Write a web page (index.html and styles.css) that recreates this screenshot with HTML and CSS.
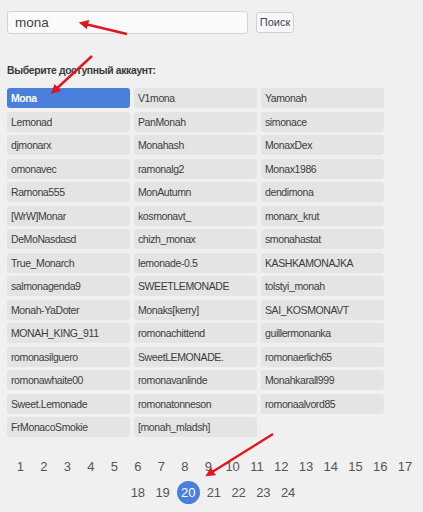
FILE: index.html
```html
<!DOCTYPE html>
<html>
<head>
<meta charset="utf-8">
<link rel="stylesheet" href="styles.css">
</head>
<body>
<div class="page">
  <div class="search">
    <div class="input">mona</div>
    <div class="btn">Поиск</div>
  </div>
  <div class="label">Выберите доступный аккаунт:</div>
  <div class="grid">
    <div class="acc active">Mona</div><div class="acc">V1mona</div><div class="acc">Yamonah</div>
    <div class="acc">Lemonad</div><div class="acc">PanMonah</div><div class="acc">simonace</div>
    <div class="acc">djmonarx</div><div class="acc">Monahash</div><div class="acc">MonaxDex</div>
    <div class="acc">omonavec</div><div class="acc">ramonalg2</div><div class="acc">Monax1986</div>
    <div class="acc">Ramona555</div><div class="acc">MonAutumn</div><div class="acc">dendimona</div>
    <div class="acc">[WrW]Monar</div><div class="acc">kosmonavt_</div><div class="acc">monarx_krut</div>
    <div class="acc">DeMoNasdasd</div><div class="acc">chizh_monax</div><div class="acc">smonahastat</div>
    <div class="acc">True_Monarch</div><div class="acc">lemonade-0.5</div><div class="acc">KASHKAMONAJKA</div>
    <div class="acc">salmonagenda9</div><div class="acc">SWEETLEMONADE</div><div class="acc">tolstyi_monah</div>
    <div class="acc">Monah-YaDoter</div><div class="acc">Monaks[kerry]</div><div class="acc">SAI_KOSMONAVT</div>
    <div class="acc">MONAH_KING_911</div><div class="acc">romonachittend</div><div class="acc">guillermonanka</div>
    <div class="acc">romonasilguero</div><div class="acc">SweetLEMONADE.</div><div class="acc">romonaerlich65</div>
    <div class="acc">romonawhaite00</div><div class="acc">romonavanlinde</div><div class="acc">Monahkarall999</div>
    <div class="acc">Sweet.Lemonade</div><div class="acc">romonatonneson</div><div class="acc">romonaalvord85</div>
    <div class="acc">FrMonacoSmokie</div><div class="acc">[monah_mladsh]</div>
  </div>
  <div class="pager">
    <span>1</span><span>2</span><span>3</span><span>4</span><span>5</span><span>6</span><span>7</span><span>8</span><span>9</span><span>10</span><span>11</span><span>12</span><span>13</span><span>14</span><span>15</span><span>16</span><span>17</span><span>18</span><span>19</span><span class="cur">20</span><span>21</span><span>22</span><span>23</span><span>24</span>
  </div>
</div>
<svg class="arrows" width="423" height="512" viewBox="0 0 423 512">
  <defs>
    <marker id="ah" markerWidth="4" markerHeight="4" refX="2.2" refY="2" orient="auto" markerUnits="strokeWidth">
      <path d="M0,0 L4,2 L0,4 Z" fill="#e3161b"/>
    </marker>
  </defs>
  <line x1="127" y1="34" x2="83" y2="23.5" stroke="#e3161b" stroke-width="2.4" marker-end="url(#ah)"/>
  <line x1="92" y1="56" x2="54" y2="91" stroke="#e3161b" stroke-width="2.4" marker-end="url(#ah)"/>
  <line x1="273" y1="434" x2="209" y2="474" stroke="#e3161b" stroke-width="2.4" marker-end="url(#ah)"/>
</svg>
</body>
</html>
```
FILE: styles.css
```css
html, body {
  margin: 0;
  padding: 0;
  background: #f0f0f0;
  font-family: "Liberation Sans", Arial, sans-serif;
  color: #333;
}
.page {
  width: 423px;
  height: 512px;
  overflow: hidden;
}
.search {
  display: flex;
  align-items: center;
  padding: 11px 0 0 7px;
}
.input {
  box-sizing: border-box;
  width: 241px;
  height: 23px;
  border: 1px solid #d4d4d4;
  border-radius: 3px;
  background: #fafafa;
  font-size: 13.5px;
  line-height: 21px;
  padding-left: 7px;
  color: #444;
}
.btn {
  box-sizing: border-box;
  margin-left: 8px;
  width: 38px;
  height: 21px;
  border: 1px solid #d0d0d0;
  border-radius: 3px;
  background: #f7f7f7;
  font-size: 11px;
  line-height: 19px;
  text-align: center;
  color: #445;
}
.label {
  margin: 30px 0 0 7px;
  font-size: 10.4px;
  letter-spacing: -0.35px;
  font-weight: bold;
  line-height: 13px;
  color: #3a3a3a;
}
.grid {
  display: grid;
  grid-template-columns: repeat(3, 123px);
  column-gap: 4px;
  row-gap: 3.5px;
  margin: 11px 0 0 7px;
}
.acc {
  height: 20px;
  line-height: 20px;
  background: #e4e4e4;
  border-radius: 3px;
  font-size: 10.5px;
  letter-spacing: -0.4px;
  padding-left: 4px;
  color: #3c3c3c;
  white-space: nowrap;
  overflow: hidden;
}
.acc.active {
  background: #4a7fdc;
  color: #fff;
  font-weight: bold;
}
.pager {
  display: flex;
  flex-wrap: wrap;
  justify-content: center;
  column-gap: 3.5px;
  row-gap: 3px;
  width: 412px;
  margin: 18px 0 0 7px;
  font-size: 13px;
  color: #555;
}
.pager span {
  box-sizing: border-box;
  min-width: 20px;
  padding: 0 3.4px;
  height: 23px;
  line-height: 23px;
  text-align: center;
}
.pager span.cur {
  width: 23px;
  min-width: 23px;
  padding: 0;
  border-radius: 50%;
  background: #4a7fdc;
  color: #fff;
}
.arrows {
  position: absolute;
  left: 0;
  top: 0;
  pointer-events: none;
}
```
